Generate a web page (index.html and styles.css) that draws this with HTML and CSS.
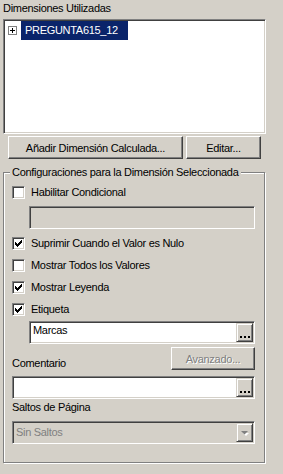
FILE: index.html
```html
<!DOCTYPE html>
<html lang="es">
<head>
    <meta charset="UTF-8">
    <title>Dimensiones</title>
    <link rel="stylesheet" href="styles.css">
</head>
<body>

    <!-- Dimension list -->
    <div class="caption">Dimensiones Utilizadas</div>
    <div class="listbox">
        <div class="tree-item">
            <svg class="expander" width="9" height="9" viewBox="0 0 9 9">
                <rect x="0.5" y="0.5" width="8" height="8" fill="#fff" stroke="#808080"/>
                <path d="M2 4.5h5M4.5 2v5" stroke="#000"/>
            </svg>
            <span class="tree-label">PREGUNTA615_12</span>
        </div>
    </div>

    <div class="button-row">
        <button class="btn btn-add">Añadir Dimensión Calculada...</button>
        <button class="btn btn-edit">Editar...</button>
    </div>

    <!-- Settings for the selected dimension -->
    <fieldset class="group">
        <legend>Configuraciones para la Dimensión Seleccionada</legend>

        <div class="check-row">
            <span class="check"></span>
            <span class="check-label">Habilitar Condicional</span>
        </div>
        <div class="field field-disabled field-indent field-cond"></div>

        <div class="check-row first-opt">
            <span class="check"><svg class="tick" width="11" height="11" viewBox="0 0 11 11"><path d="M2 4h1v3H2zM3 5h1v3H3zM4 6h1v3H4zM5 5h1v3H5zM6 4h1v3H6zM7 3h1v3H7zM8 2h1v3H8z"/></svg></span>
            <span class="check-label">Suprimir Cuando el Valor es Nulo</span>
        </div>
        <div class="check-row opt">
            <span class="check"></span>
            <span class="check-label">Mostrar Todos los Valores</span>
        </div>
        <div class="check-row opt">
            <span class="check"><svg class="tick" width="11" height="11" viewBox="0 0 11 11"><path d="M2 4h1v3H2zM3 5h1v3H3zM4 6h1v3H4zM5 5h1v3H5zM6 4h1v3H6zM7 3h1v3H7zM8 2h1v3H8z"/></svg></span>
            <span class="check-label">Mostrar Leyenda</span>
        </div>
        <div class="check-row opt">
            <span class="check"><svg class="tick" width="11" height="11" viewBox="0 0 11 11"><path d="M2 4h1v3H2zM3 5h1v3H3zM4 6h1v3H4zM5 5h1v3H5zM6 4h1v3H6zM7 3h1v3H7zM8 2h1v3H8z"/></svg></span>
            <span class="check-label">Etiqueta</span>
        </div>

        <div class="field field-indent field-label">
            <span class="field-text">Marcas</span>
            <span class="dots-btn"><svg width="15" height="17" viewBox="0 0 15 17"><path d="M3 12h2v2H3zM7 12h2v2H7zM11 12h2v2h-2z"/></svg></span>
        </div>

        <div class="comment-row">
            <span class="plain-label">Comentario</span>
            <button class="btn btn-advanced" disabled>Avanzado...</button>
        </div>
        <div class="field field-comment">
            <span class="field-text"></span>
            <span class="dots-btn"><svg width="15" height="17" viewBox="0 0 15 17"><path d="M3 12h2v2H3zM7 12h2v2H7zM11 12h2v2h-2z"/></svg></span>
        </div>

        <div class="plain-label page-label">Saltos de Página</div>
        <div class="field field-disabled combo">
            <span class="field-text combo-text">Sin Saltos</span>
            <span class="combo-btn"><svg width="15" height="17" viewBox="0 0 15 17"><path d="M5 8h6l-3 3z" fill="#fff" transform="translate(1 1)"/><path d="M4 7h7l-3.5 3.5z" fill="#808080"/></svg></span>
        </div>
    </fieldset>

</body>
</html>
```

FILE: styles.css
```css
/* Classic dialog panel */
body {
    margin: 0;
    width: 283px;
    height: 474px;
    background: #d4d0c8;
    font-family: "Liberation Sans", Arial, sans-serif;
    font-size: 11px;
    letter-spacing: -0.3px;
    color: #000;
    overflow: hidden;
}

.caption {
    height: 19px;
    line-height: 16px;
    padding-left: 3px;
}

/* Sunken boxes */
.listbox,
.field,
.check {
    box-sizing: border-box;
    border: 1px solid;
    border-color: #808080 #fff #fff #808080;
    box-shadow: inset 1px 1px 0 #404040, inset -1px -1px 0 #d4d0c8;
}

.listbox {
    margin-left: 3px;
    width: 263px;
    height: 115px;
    background: #fff;
}

.tree-item {
    display: flex;
    align-items: center;
    margin-top: 1px;
    padding-left: 4px;
    height: 19px;
}

.expander {
    display: block;
    margin-right: 4px;
}

.tree-label {
    box-sizing: border-box;
    width: 107px;
    height: 19px;
    line-height: 19px;
    padding-left: 4px;
    background: #0a246a;
    color: #fff;
}

/* Push buttons */
.button-row {
    display: flex;
    gap: 3px;
    margin-top: 2px;
    padding-left: 8px;
}

.btn {
    box-sizing: border-box;
    height: 23px;
    padding: 1px 0 0;
    font: inherit;
    letter-spacing: inherit;
    color: #000;
    background: #d4d0c8;
    border: 1px solid;
    border-color: #fff #404040 #404040 #fff;
    box-shadow: inset -1px -1px 0 #808080;
    border-radius: 0;
}

.btn-add {
    width: 175px;
}

.btn-edit {
    width: 75px;
}

.btn-advanced {
    width: 84px;
    margin-left: auto;
    color: #808080;
    text-shadow: 1px 1px 0 #fff;
}

/* Group box */
.group {
    box-sizing: border-box;
    width: 262px;
    margin: 6px 0 0 3px;
    padding: 5px 9px 18px 8px;
    min-width: 0;
    border: 1px solid #808080;
    box-shadow: inset 1px 1px 0 #fff, 1px 1px 0 #fff;
}

.group legend {
    line-height: 14px;
    padding: 0 2px;
    margin-left: -2px;
    background: #d4d0c8;
}

.check-row {
    display: flex;
    align-items: center;
    height: 17px;
}

.first-opt {
    margin-top: 6px;
}

.opt {
    margin-top: 5px;
}

.check {
    display: block;
    width: 13px;
    height: 13px;
    background: #fff;
}

.tick {
    display: block;
}

.check-label {
    margin-left: 6px;
    line-height: 17px;
}

/* Text fields */
.field {
    display: flex;
    height: 23px;
    padding: 1px;
    background: #fff;
}

.field-disabled {
    background: #d4d0c8;
}

.field-indent {
    margin-left: 17px;
}

.field-cond {
    margin-top: 5px;
}

.field-label {
    margin-top: 3px;
}

.field-text {
    flex: 1;
    padding-left: 2px;
    line-height: 14px;
}

.dots-btn,
.combo-btn {
    box-sizing: border-box;
    width: 17px;
    height: 19px;
    border: 1px solid;
    border-color: #d4d0c8 #404040 #404040 #d4d0c8;
    box-shadow: inset 1px 1px 0 #fff, inset -1px -1px 0 #808080;
    background: #d4d0c8;
}

.dots-btn svg,
.combo-btn svg {
    display: block;
}

.comment-row {
    display: flex;
    align-items: flex-end;
    margin-top: 3px;
}

.plain-label {
    line-height: 13px;
}

.field-comment {
    margin-top: 6px;
}

.page-label {
    margin-top: 1px;
    line-height: 14px;
}

.combo {
    margin-top: 7px;
}

.combo-text {
    padding-top: 2px;
    color: #808080;
}
```
